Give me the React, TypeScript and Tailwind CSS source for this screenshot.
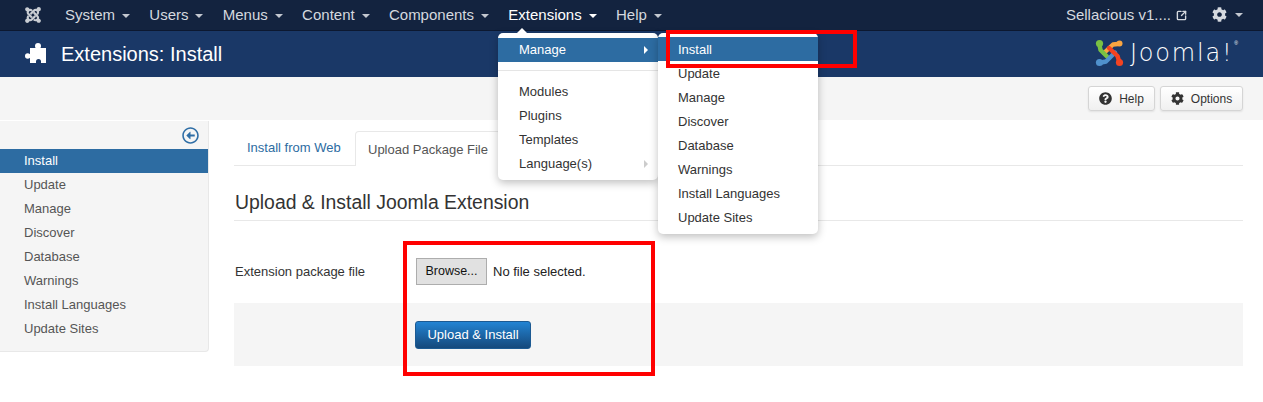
import { FaJoomla, FaCog, FaQuestionCircle, FaRegArrowAltCircleLeft } from "react-icons/fa";
import { SquareArrowOutUpRight } from "lucide-react";

const navItems = ["System", "Users", "Menus", "Content", "Components", "Extensions", "Help"];
const sideItems = ["Install", "Update", "Manage", "Discover", "Database", "Warnings", "Install Languages", "Update Sites"];

function Caret({ className = "border-t-[#c3c8d0]" }: { className?: string }) {
    return <span className={`inline-block ml-[7px] w-0 h-0 border-x-[4px] border-x-transparent border-t-[4px] align-middle ${className}`} />;
}

function JoomlaMark() {
    return (
        <svg width="29" height="28" viewBox="0 0 29 28" fill="none" strokeWidth="4.4" strokeLinecap="round" strokeLinejoin="round">
            <g stroke="#f9a541" fill="#f9a541">
                <path d="M23 5 L18 5.5 L9 14" fill="none" />
                <circle cx="24.5" cy="4.5" r="3" strokeWidth="0" />
            </g>
            <g stroke="#7ac143" fill="#7ac143">
                <path d="M4.5 6 L5.5 11 L12 17.5" fill="none" />
                <circle cx="4.5" cy="4.5" r="3.6" strokeWidth="0" />
            </g>
            <g stroke="#5091cd" fill="#5091cd">
                <path d="M6 23.5 L11 22.5 L20 13.5" fill="none" />
                <circle cx="4.5" cy="23.5" r="3.6" strokeWidth="0" />
            </g>
            <g stroke="#f44321" fill="#f44321">
                <path d="M24 22 L22.5 17 L14 9" fill="none" />
                <circle cx="24.5" cy="23.5" r="3.6" strokeWidth="0" />
            </g>
        </svg>
    );
}

function PuzzleIcon() {
    return (
        <svg width="22" height="22" viewBox="0 0 22 22" className="mr-[14px]" fill="#ffffff">
            <circle cx="13" cy="3" r="3" />
            <rect x="11" y="3" width="4" height="4" />
            <rect x="5" y="5" width="16" height="15" />
            <circle cx="2.7" cy="13" r="2.7" />
            <rect x="2" y="11.5" width="4" height="3" />
            <circle cx="13.5" cy="18.5" r="2.5" fill="#1a3867" />
            <rect x="11" y="18.5" width="5" height="2" fill="#1a3867" />
        </svg>
    );
}

export default function App() {
    return (
        <div className="relative w-[1263px] h-[402px] overflow-hidden bg-white font-['Liberation_Sans',Arial,sans-serif] text-[13px] text-[#333]">
            {/* Top nav */}
            <nav className="h-[31px] bg-[#13233f] border-b border-[#0c1830] flex items-center justify-between pl-[24px] pr-[20px] text-[15px] text-[#d5d9df]">
                <div className="flex items-center">
                    <FaJoomla className="w-[18px] h-[18px] text-[#c9cdd3] mr-[23px]" />
                    <ul className="flex gap-[19.3px]">
                        {navItems.map((item) => (
                            <li key={item} className={item === "Extensions" ? "text-white" : ""}>
                                {item}
                                <Caret className={item === "Extensions" ? "border-t-white" : "border-t-[#c3c8d0]"} />
                            </li>
                        ))}
                    </ul>
                </div>
                <div className="flex items-center">
                    <span>Sellacious v1....</span>
                    <SquareArrowOutUpRight className="w-[11px] h-[11px] ml-[5px] text-[#d5d9df]" strokeWidth={3} />
                    <FaCog className="w-[15px] h-[15px] ml-[25px] -mt-[2px] text-[#d5d9df]" />
                    <Caret className="border-t-[#c3c8d0] ml-[8px]" />
                </div>
            </nav>

            {/* Title bar */}
            <header className="h-[46px] bg-[#1a3867] flex items-center justify-between pl-[25px] pr-[25px] text-white">
                <div className="flex items-center">
                    <PuzzleIcon />
                    <h1 className="text-[20px] leading-none">Extensions: Install</h1>
                </div>
                <div className="flex items-center -mt-[3px]">
                    <JoomlaMark />
                    <span className="ml-[6px] font-['DejaVu_Sans'] font-extralight text-[24px] leading-none tracking-[1.8px]">Joomla!</span>
                    <span className="self-start text-[5px] leading-none ml-[1px] mt-[2px]">®</span>
                </div>
            </header>

            {/* Toolbar */}
            <div className="h-[43px] bg-[#f5f5f5] flex items-center justify-end gap-[5px] pr-[20px]">
                <button className="h-[25px] w-[67px] flex items-center justify-center gap-[7px] rounded-[3px] border border-[#d5d5d5] bg-gradient-to-b from-white to-[#f0f0f0] text-[12px] text-[#333] shadow-[0_1px_2px_rgba(0,0,0,0.08)]">
                    <FaQuestionCircle className="w-[13px] h-[13px]" />
                    Help
                </button>
                <button className="h-[25px] w-[83px] flex items-center justify-center gap-[7px] rounded-[3px] border border-[#d5d5d5] bg-gradient-to-b from-white to-[#f0f0f0] text-[12px] text-[#333] shadow-[0_1px_2px_rgba(0,0,0,0.08)]">
                    <FaCog className="w-[13px] h-[13px]" />
                    Options
                </button>
            </div>

            {/* Main */}
            <div className="flex pt-[1px]">
                {/* Sidebar */}
                <aside className="w-[209px] h-[231px] shrink-0 bg-[#f5f5f5] border-r border-b border-[#e8e8e8] rounded-br-[4px]">
                    <div className="h-[28px] flex justify-end items-start pt-[6px] pr-[9px]">
                        <FaRegArrowAltCircleLeft className="w-[17px] h-[17px] text-[#2f6ea6]" />
                    </div>
                    <ul>
                        {sideItems.map((item) => (
                            <li
                                key={item}
                                className={`h-[24px] leading-[24px] pl-[24px] ${item === "Install" ? "bg-[#2d6ca2] text-white" : "text-[#555]"}`}
                            >
                                {item}
                            </li>
                        ))}
                    </ul>
                </aside>

                {/* Content */}
                <main className="flex-1 pl-[25px] pr-[20px]">
                    <div className="h-[45px] flex items-end border-b border-[#e8e8e8]">
                        <a className="h-[35px] w-[121px] px-[13px] leading-[35px] text-[#2d6ca2]">Install from Web</a>
                        <a className="h-[35px] px-[12px] leading-[35px] whitespace-nowrap text-[#555] bg-white border border-b-0 border-[#e8e8e8] rounded-t-[4px] -mb-[1px]">Upload Package File</a>
                    </div>
                    <h2 className="h-[55px] pt-[25px] pl-[1px] text-[19.4px] leading-[22px] text-[#333] border-b border-[#e8e8e8]">Upload &amp; Install Joomla Extension</h2>
                    <div className="h-[82px] flex items-center pt-[19px] pl-[1px]">
                        <label className="w-[181px]">Extension package file</label>
                        <button className="w-[71px] h-[27px] bg-[#e1e1e1] border border-[#adadad] text-[12.5px] text-[#111]">Browse...</button>
                        <span className="ml-[6px] text-[13px] text-[#222]">No file selected.</span>
                    </div>
                    <div className="h-[63px] bg-[#f5f5f5] flex items-center pl-[181px]">
                        <button className="w-[116px] h-[28px] rounded-[3px] border border-[#1c5a92] bg-gradient-to-b from-[#2384d3] to-[#15497c] text-[13px] text-white">Upload &amp; Install</button>
                    </div>
                </main>
            </div>

            {/* Extensions dropdown */}
            <div className="absolute left-[498px] top-[33px] w-[160px] h-[147px] bg-white rounded-[5px] shadow-[0_3px_8px_rgba(0,0,0,0.25)] pt-[5px]">
                <span className="absolute left-[18px] -top-[5px] w-0 h-0 border-x-[6px] border-x-transparent border-b-[6px] border-b-white" />
                <div className="h-[24px] leading-[24px] pl-[21px] pr-[10px] bg-[#2d6ca2] text-white flex items-center justify-between">
                    Manage
                    <span className="w-0 h-0 border-y-[4px] border-y-transparent border-l-[4px] border-l-white" />
                </div>
                <div className="h-px bg-[#e5e5e5] mt-[8px] mb-[9px]" />
                <div className="h-[24px] leading-[24px] pl-[21px]">Modules</div>
                <div className="h-[24px] leading-[24px] pl-[21px]">Plugins</div>
                <div className="h-[24px] leading-[24px] pl-[21px]">Templates</div>
                <div className="h-[24px] leading-[24px] pl-[21px] pr-[10px] flex items-center justify-between">
                    Language(s)
                    <span className="w-0 h-0 border-y-[4px] border-y-transparent border-l-[4px] border-l-[#ccc]" />
                </div>
            </div>

            {/* Manage submenu */}
            <div className="absolute left-[658px] top-[33px] w-[160px] h-[201px] bg-white rounded-[5px] shadow-[0_3px_8px_rgba(0,0,0,0.25)] pt-[4px]">
                {sideItems.map((item) => (
                    <div
                        key={item}
                        className={`h-[24px] leading-[26px] pl-[20px] ${item === "Install" ? "bg-[#2d6ca2] text-white" : ""}`}
                    >
                        {item}
                    </div>
                ))}
            </div>

            {/* Red annotation boxes */}
            <div className="absolute left-[666px] top-[30px] w-[191px] h-[38px] border-[4px] border-[#ff0000]" />
            <div className="absolute left-[403px] top-[241px] w-[252px] h-[135px] border-[4px] border-[#ff0000]" />
        </div>
    );
}
